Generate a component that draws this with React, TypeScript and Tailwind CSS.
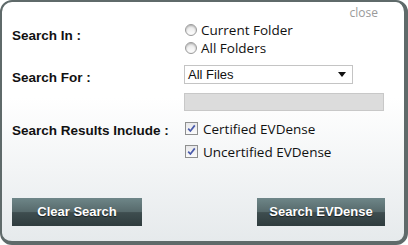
import React from 'react';

const labelFont = { fontFamily: '"Liberation Sans", Arial, sans-serif' };

const Radio: React.FC<{ label: string }> = ({ label }) => (
  <label className="flex items-center h-[18px]">
    <span className="w-[12px] h-[12px] rounded-full border border-[#9a9a9a] bg-gradient-to-b from-[#e6e6e6] to-[#ffffff] shadow-[inset_0_1px_2px_rgba(0,0,0,0.25)] ml-[1px]" />
    <span className="ml-[4px] text-[13.5px] text-[#111] leading-[18px]">{label}</span>
  </label>
);

const Check: React.FC<{ label: string }> = ({ label }) => (
  <label className="flex items-center h-[23px]">
    <span className="w-[13px] h-[13px] border border-[#8e8f8f] bg-gradient-to-b from-[#e8e8ea] to-[#fafafa] flex items-center justify-center ml-[1px]">
      <svg width="9" height="9" viewBox="0 0 9 9">
        <path d="M1.2 4.6 L3.4 7 L7.8 1.4" fill="none" stroke="#4a5bab" strokeWidth="1.7" />
      </svg>
    </span>
    <span className="ml-[5px] text-[13.5px] text-[#111] leading-[18px]">{label}</span>
  </label>
);

const ActionButton: React.FC<{ label: string; className?: string }> = ({ label, className }) => (
  <button
    className={
      'h-[28px] text-white font-bold text-[13px] bg-[linear-gradient(to_bottom,#6e8688_0%,#56696b_50%,#3e4d4f_52%,#2f3c3e_100%)] [text-shadow:0_1px_1px_rgba(0,0,0,0.6)] ' +
      (className ?? '')
    }
    style={labelFont}
  >
    {label}
  </button>
);

export default function App() {
  return (
    <div className="w-[408px] h-[245px] bg-white">
      <div
        className="relative w-[408px] h-[245px] rounded-[12px] border-[#5f6a6a] border-l-2 border-t-2 border-r-[4px] border-b-[4px] bg-gradient-to-b from-white from-40% to-[#e6eaec] overflow-hidden"
        style={{ fontFamily: '"Open Sans", "Noto Sans", sans-serif' }}
      >
        <span className="absolute right-[26px] top-[2px] text-[12px] text-[#9a9a9a]">close</span>

        <div className="grid grid-cols-[172px_1fr] pl-[10px] pt-[19px]">
          <div className="font-bold text-[13.5px] text-[#111] pt-[5px]" style={labelFont}>
            Search In :
          </div>
          <div className="flex flex-col">
            <Radio label="Current Folder" />
            <Radio label="All Folders" />
          </div>

          <div className="font-bold text-[13.5px] text-[#111] pt-[11px]" style={labelFont}>
            Search For :
          </div>
          <div className="flex flex-col pt-[8px]">
            <div
              className="w-[169px] h-[19px] border border-[#c4c4c4] bg-white flex items-center justify-between pl-[3px] pr-[6px] text-[13px] text-[#111]"
              style={labelFont}
            >
              <span>All Files</span>
              <svg width="8" height="5" viewBox="0 0 8 5">
                <path d="M0 0 H8 L4 5 Z" fill="#111" />
              </svg>
            </div>
            <div className="w-[200px] h-[18px] mt-[9px] border border-[#c8c8c8] bg-[#dcdcdc]" />
          </div>

          <div className="font-bold text-[13.5px] text-[#111] pt-[10px] whitespace-nowrap" style={labelFont}>
            Search Results Include :
          </div>
          <div className="flex flex-col pt-[6px]">
            <Check label="Certified EVDense" />
            <Check label="Uncertified EVDense" />
          </div>
        </div>

        <div className="flex justify-between pl-[10px] pr-[19px] mt-[35px]">
          <ActionButton label="Clear Search" className="w-[130px]" />
          <ActionButton label="Search EVDense" className="w-[128px]" />
        </div>
      </div>
    </div>
  );
}
